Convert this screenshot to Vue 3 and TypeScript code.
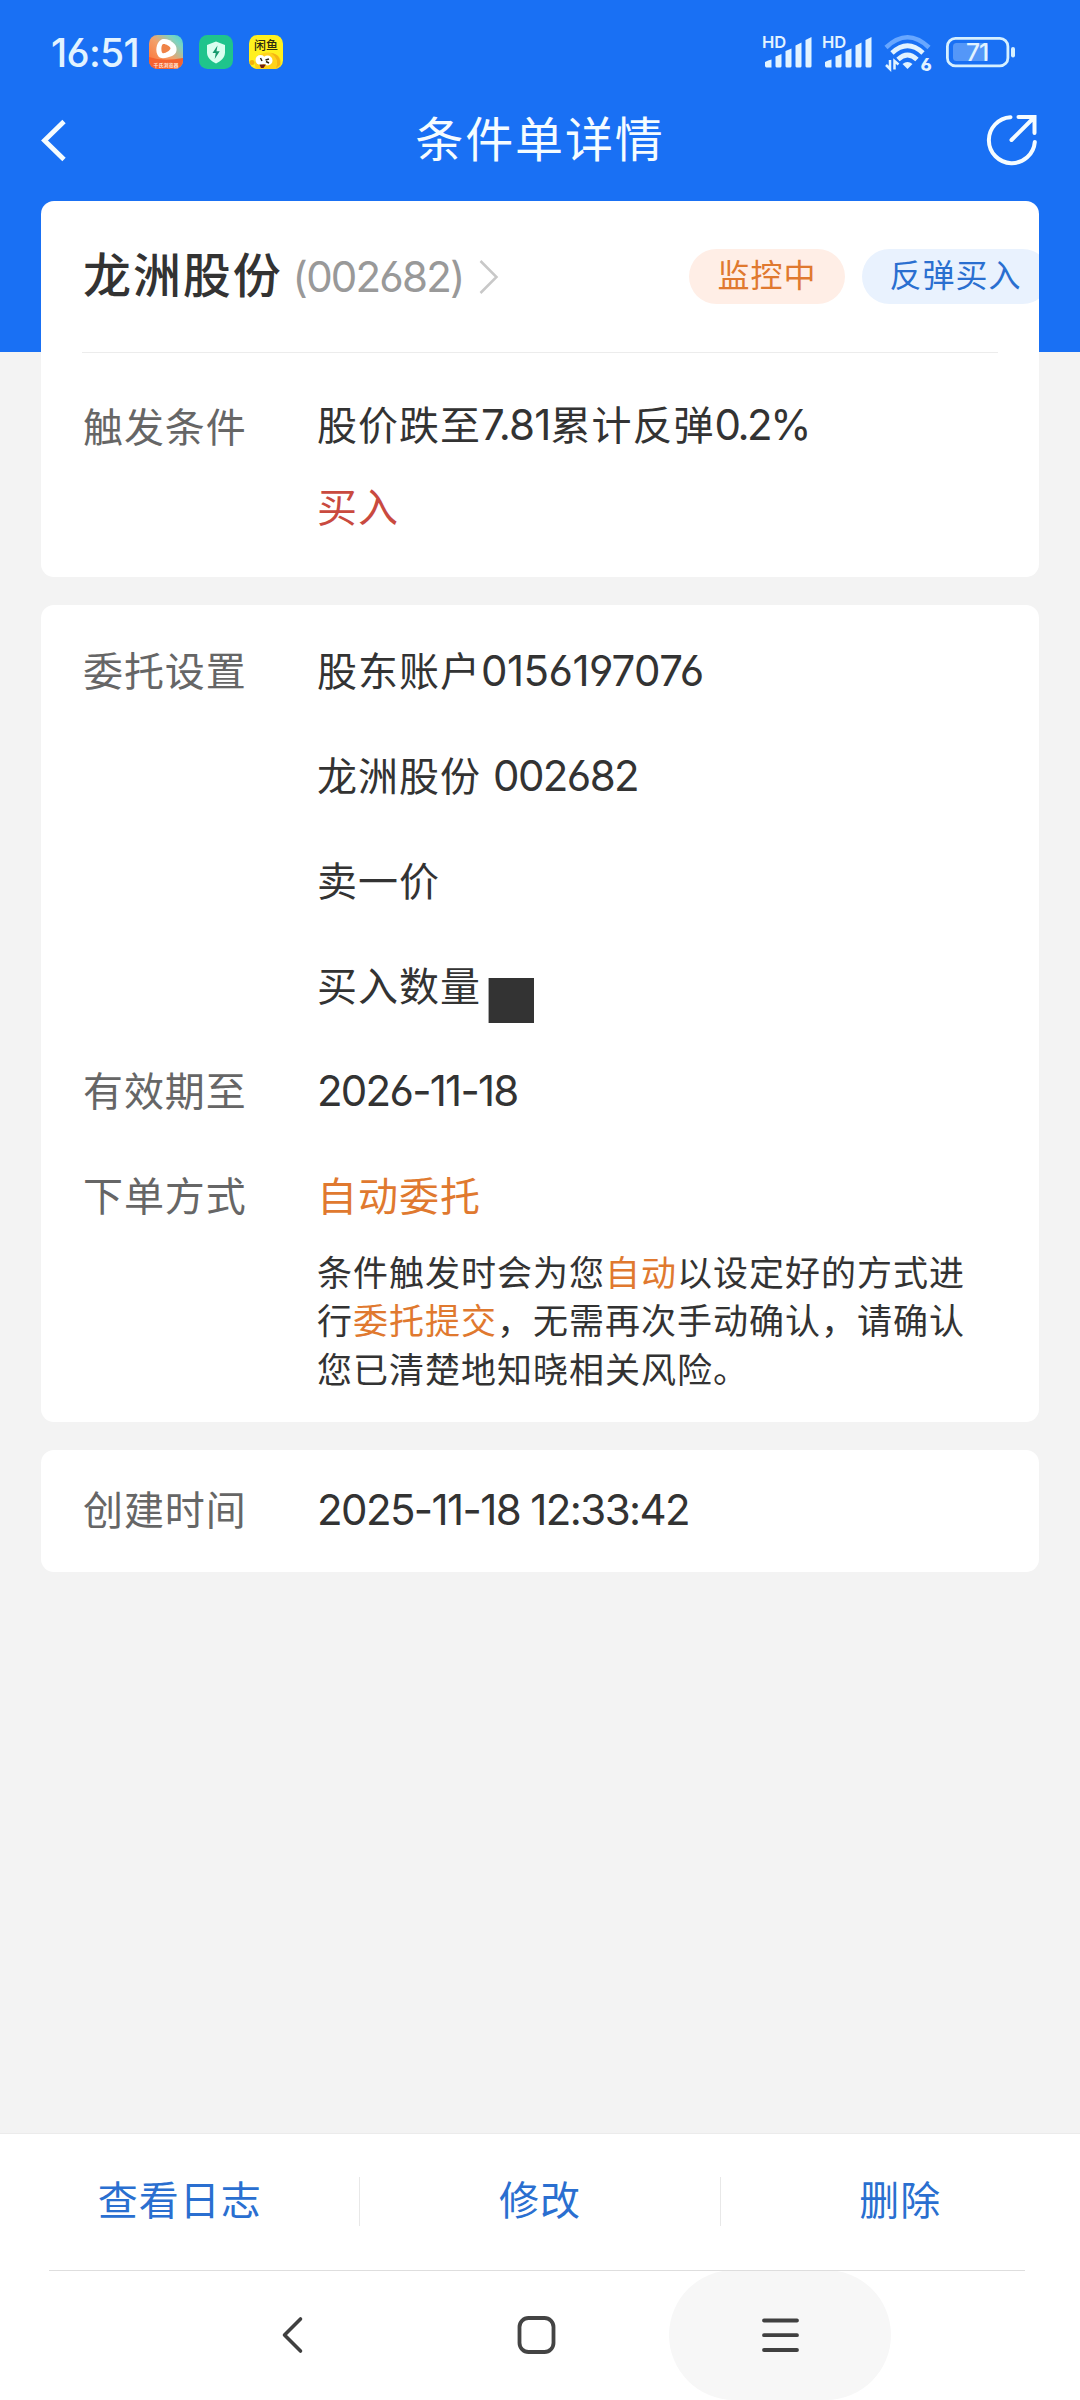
<script setup lang="ts">
interface Action { label: string }
const signals: number[] = [0, 1]
const actions: Action[] = [{ label: '查看日志' }, { label: '修改' }, { label: '删除' }]
</script>

<template>
  <div class="screen">
    <div class="hero">
      <div class="status">
        <span class="clock">16:51</span>
        <div class="apps">
          <svg width="34" height="34" viewBox="0 0 34 34">
            <defs>
              <linearGradient id="ga" x1="0" y1="1" x2="1" y2="0">
                <stop offset="0" stop-color="#ff6a2c" /><stop offset=".5" stop-color="#f3a06a" /><stop offset=".8" stop-color="#7fd3c0" /><stop offset="1" stop-color="#49d6d0" />
              </linearGradient>
              <clipPath id="ca"><rect width="34" height="34" rx="8.5" /></clipPath>
            </defs>
            <g clip-path="url(#ca)">
              <rect width="34" height="34" fill="url(#ga)" />
              <path d="M0 22Q14 27 34 23V34H0Z" fill="#f4622f" />
              <path d="M12.5 4.5C16 3 22 5 25.5 9C29 13 28 19 23 21C18 23 12 24.5 9.500 21.5C6 17 6.5 8 12.500 4.5Z" fill="#fff" />
              <path d="M13.5 9.5C15 8 21 11 21.5 13.3C21.5 15.5 15.5 19 13.5 18C12 17 12 11 13.5 9.5Z" fill="#ef8348" />
            </g>
            <text x="17" y="31.5" text-anchor="middle" class="tiny" fill="#ffe6d8">千氏浏览器</text>
          </svg>
          <svg width="34" height="34" viewBox="0 0 34 34">
            <rect width="34" height="34" rx="8.5" fill="#1fc48c" />
            <path d="M17 6.5L26 10V17.5C26 22.5 22 26 17 28.5C12 26 8 22.5 8 17.5V10Z" fill="#d9fff0" />
            <path d="M18.5 10.5L13.5 18H16.7L15.7 24L20.7 16.3H17.5Z" fill="#14996c" />
          </svg>
          <svg width="34" height="34" viewBox="0 0 34 34">
            <defs><clipPath id="cc"><rect width="34" height="34" rx="8.5" /></clipPath></defs>
            <g clip-path="url(#cc)">
              <rect width="34" height="34" fill="#fff01e" />
              <path d="M7 34C3 24 9 18 18 17.5C27 17 33 22 32 30L29 34Z" fill="#ffd21a" />
              <path d="M22 18Q32 19 31 30L27 33Q31 24 22 18Z" fill="#f5b512" />
              <circle cx="3" cy="27.5" r="2.5" fill="#f2b20e" />
              <circle cx="11.5" cy="25" r="5" fill="#fff" /><circle cx="18.5" cy="25.5" r="5" fill="#fff" />
              <path d="M11.5 23L13 26M16.5 25L20 24M17 26.5L20 28" stroke="#2b2410" stroke-width="1.5" fill="none" />
              <path d="M10.5 29.5H17L14.5 33H12Z" fill="#6e1c14" />
            </g>
            <text x="17" y="14.500" text-anchor="middle" class="fish" fill="#2b2a10">闲鱼</text>
          </svg>
        </div>
        <div class="sys">
          <svg v-for="i in signals" :key="i" class="signal" width="60" height="40" viewBox="0 0 60 40" fill="#e2f3ff">
            <text x="0" y="16" class="hd">HD</text>
            <path d="M3 33.5V30Q6 28 9.5 27.5V35.5H4.5Q3 35.5 3 33.5ZM13.5 24.5L19.5 22V34.5L18.5 35.5H14.5L13.5 34.5ZM23.5 19L29.5 16.5V34.5L28.5 35.5H24.5L23.5 34.5ZM33.5 13.5L39.5 10.5V34.5L38.5 35.5H34.5L33.5 34.5ZM43.5 8L49.5 5V34.5L48.5 35.5H44.5L43.5 34.5Z" />
          </svg>
          <svg class="wifi" width="50" height="42" viewBox="0 0 50 42" fill="none">
            <path d="M3 15.5Q24.500 -5 46 15.5" stroke="#68a7ff" stroke-width="4.500" />
            <path d="M9 21Q24.5 6.500 40 21" stroke="#e2f3ff" stroke-width="4.800" />
            <path d="M15 27.500Q24.5 18.500 34 27.500" stroke="#e2f3ff" stroke-width="4.800" />
            <path d="M19.5 32Q24.5 28 29.5 32L24.5 37Z" fill="#e2f3ff" />
            <path d="M7 28V37L3 33M11.500 37.500V29L15.500 32.500" stroke="#e2f3ff" stroke-width="2.500" />
            <text x="37.500" y="38.500" class="six" fill="#e2f3ff">6</text>
          </svg>
          <svg class="battery" width="70" height="32" viewBox="0 0 70 32">
            <rect x="1.400" y="1.400" width="60.500" height="27.500" rx="8" fill="none" stroke="#d6f0ff" stroke-width="2.800" />
            <rect x="7" y="6" width="35" height="18" rx="3.500" fill="#5497f8" />
            <rect x="65" y="10" width="4" height="10.500" rx="2" fill="#d6f0ff" />
            <text x="31" y="24" text-anchor="middle" class="pct" fill="#e2f3ff">71</text>
          </svg>
        </div>
      </div>
      <header class="nav">
        <svg class="back" width="30" height="50" viewBox="0 0 30 50" fill="none" stroke="#f5fcff" stroke-width="4.8"><path d="M24 6.5L4.5 25.5L24 44.5" /></svg>
        <h1>条件单详情</h1>
        <svg width="54" height="54" viewBox="0 0 54 54" fill="none" stroke="#f5fcff" stroke-width="4" stroke-linecap="round">
          <path d="M26.5 4.2A23 23 0 1 0 50.8 29" /><path d="M27.5 27L50.5 4M34.5 4H50.5V20" stroke-linejoin="miter" />
        </svg>
      </header>
    </div>

    <main>
      <section class="card first">
        <div class="head">
          <strong>龙洲股份</strong>
          <span class="code">(002682)</span>
          <svg class="chev" width="22" height="36" viewBox="0 0 22 36" fill="none" stroke="#c8c8c8" stroke-width="2.5"><path d="M2.5 2L18.5 18L2.5 34" /></svg>
          <span class="tag orange">监控中</span>
          <span class="tag blue">反弹买入</span>
        </div>
        <div class="row">
          <span class="label">触发条件</span>
          <div class="value">
            <p>股价跌至<span class="n price">7.81</span>累计反弹<span class="n ratio">0.2%</span></p>
            <p class="buy">买入</p>
          </div>
        </div>
      </section>

      <section class="card second">
        <div class="row">
          <span class="label">委托设置</span>
          <div class="value">
            <p>股东账户<span class="n account">0156197076</span></p>
            <p>龙洲股份<span class="n stock">002682</span></p>
            <p>卖一价</p>
            <p class="amount">买入数量<i class="mask"></i></p>
          </div>
        </div>
        <div class="row"><span class="label">有效期至</span><div class="value"><p><span class="n">2026-11-18</span></p></div></div>
        <div class="row">
          <span class="label">下单方式</span>
          <div class="value">
            <p class="auto">自动委托</p>
            <div class="note">条件触发时会为您<b>自动</b>以设定好的方式进<br />行<b>委托提交</b>，无需再次手动确认，请确认<br />您已清楚地知晓相关风险。</div>
          </div>
        </div>
      </section>

      <section class="card third">
        <div class="row"><span class="label">创建时间</span><div class="value"><p><span class="n created">2025-11-18 12:33:42</span></p></div></div>
      </section>
    </main>

    <footer class="actions">
      <button v-for="a in actions" :key="a.label">{{ a.label }}</button>
    </footer>
    <div class="sysnav">
      <span class="key"><svg width="40" height="44" viewBox="0 0 40 44" fill="none" stroke="#404040" stroke-width="3.6" stroke-linecap="round" stroke-linejoin="round"><path d="M28.5 6L12.5 22L28.5 38" /></svg></span>
      <span class="key"><svg width="40" height="40" viewBox="0 0 40 40" fill="none" stroke="#444" stroke-width="3.8"><rect x="3.5" y="3" width="34" height="34" rx="9" /></svg></span>
      <span class="key on"><svg width="40" height="40" viewBox="0 0 40 40" fill="none" stroke="#404040" stroke-width="3.8" stroke-linecap="round"><path d="M4 5.5H37M4 20.2H37M4 35H37" /></svg></span>
    </div>
  </div>
</template>

<style>
body { margin: 0; }
</style>

<style scoped>
.screen { width: 1080px; height: 2400px; display: flex; flex-direction: column; background: #f3f3f3; color: #333; font-family: Inter, "Noto Sans CJK SC", sans-serif; overflow: hidden; }
.hero { height: 352px; background: #1970f4; flex: none; }
.status { height: 69px; padding: 0 64px 0 51px; display: flex; align-items: flex-start; color: #e2f3ff; }
.clock { font-size: 39px; font-weight: 500; line-height: 40px; margin-top: 33px; width: 98px; white-space: nowrap; letter-spacing: -.7px; font-feature-settings: "cv03"; }
.apps { display: flex; gap: 16px; margin-top: 35px; }
.apps svg { display: block; }
.tiny { font-size: 5px; font-weight: 700; }
.fish { font-size: 12px; font-weight: 500; }
.sys { display: flex; margin-left: auto; padding-top: 32px; }
.signal { display: block; }
.hd { font-size: 16.5px; font-weight: 600; }
.six { font-size: 18px; font-weight: 800; font-feature-settings: "cv03"; }
.pct { font-size: 24.5px; font-weight: 500; letter-spacing: -1px; }
.wifi { margin-left: 1px; overflow: visible; }
.battery { margin: 5px 0 0 13px; }
.nav { height: 132px; margin-top: 5px; padding: 0 42px 0 40px; display: flex; align-items: center; justify-content: space-between; }
.back { margin-right: 26px; }
h1 { margin: 0; font-size: 48px; font-weight: 400; line-height: 60px; letter-spacing: 1.9px; color: #f5fcff; }
main { flex: 1; margin-top: -151px; padding: 0 41px; }
.card { background: #fff; border-radius: 13px; overflow: hidden; padding: 0 41px; box-sizing: border-box; margin-bottom: 28px; }
.first { height: 376px; }
.second { height: 817px; padding-top: 14px; }
.third { height: 122px; padding-top: 8px; }
.head { height: 151px; border-bottom: 1px solid #ececec; display: flex; align-items: center; white-space: nowrap; }
.head > * { flex: none; }
strong { font-size: 48px; font-weight: 500; letter-spacing: 1.9px; line-height: 60px; margin-top: -1px; padding-left: 1px; }
.code { font-size: 42px; color: #999; margin-left: 10px; letter-spacing: -1.8px; font-feature-settings: "cv03", "cv04"; }
.chev { margin-left: 15px; }
.tag { height: 55px; line-height: 54px; border-radius: 28px; font-size: 32px; letter-spacing: 1px; padding: 0 28px; }
.orange { color: #e0792f; background: #ffeee6; margin-left: 189px; }
.blue { color: #2a6fd0; background: #e9f2fe; margin-left: 17px; }
.row { display: flex; font-size: 40px; letter-spacing: 1px; }
.label { width: 235px; flex: none; color: #666; line-height: 105px; box-sizing: border-box; padding-left: 1px; letter-spacing: .9px; }
.value { flex: 1; white-space: nowrap; }
p { margin: 0; line-height: 105px; }
.n { letter-spacing: -1.75px; font-size: 42px; line-height: 1; font-feature-settings: "cv03", "cv04"; }
.price { letter-spacing: -.8px; }
.ratio { letter-spacing: -2.5px; }
.account { letter-spacing: -.5px; }
.created { letter-spacing: -1.6px; }
.stock { margin-left: 12px; letter-spacing: -1.6px; }
.first .row { padding-top: 22px; }
.first p { line-height: 83px; }
.first p:first-child { line-height: 101px; }
.buy { color: #c94a3f; margin-top: -10px; }
.amount { display: flex; align-items: center; }
.mask { width: 45px; height: 45px; background: #333; margin: 28px 0 0 8px; box-shadow: -1px 0 #aaa; }
.auto, .note b { color: #e0792f; }
.note { font-size: 35px; letter-spacing: 1px; line-height: 48.3px; }
.note b { font-weight: 400; }
.actions { height: 137px; flex: none; background: #fff; display: flex; border-top: 1px solid #ebebeb; align-items: center; box-sizing: border-box; }
button { flex: 1; height: 49px; border: 0; border-right: 1px solid #e8e8e8; background: none; color: #2a6fd0; font: 400 40px/46px Inter, "Noto Sans CJK SC", sans-serif; letter-spacing: 1px; padding: 0 0 1px; margin-top: -1px; }
button:last-child { border: 0; }
.sysnav { height: 130px; flex: none; background: #fff; position: relative; display: flex; justify-content: center; gap: 22px; padding-right: 8px; }
.sysnav::before { content: ""; position: absolute; left: 49px; right: 55px; top: 0; height: 1px; background: #dedede; }
.key { width: 222px; height: 130px; border-radius: 65px; display: flex; align-items: center; justify-content: center; }
.on { background: #f7f7f7; }
</style>
